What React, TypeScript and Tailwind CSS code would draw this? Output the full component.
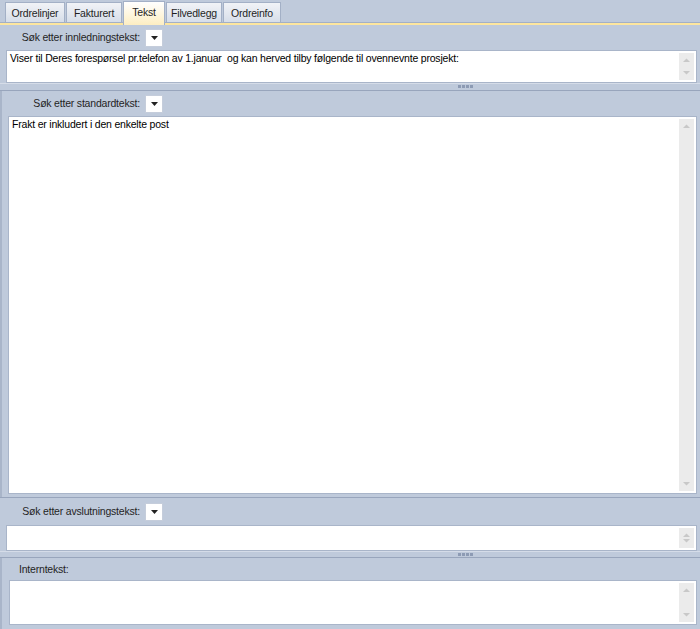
import { ReactNode } from 'react';

const font = { fontFamily: 'Tahoma, "Liberation Sans", Arial, sans-serif' };

const tabs = [
  { name: 'Ordrelinjer', w: 'w-[60px]' },
  { name: 'Fakturert', w: 'w-[56px]' },
  { name: 'Tekst', w: 'w-[42px]' },
  { name: 'Filvedlegg', w: 'w-[56px]' },
  { name: 'Ordreinfo', w: 'w-[58px]' },
];

const Dropdown = () => (
  <div className="flex h-[18px] w-[18px] shrink-0 items-center justify-center border border-[#c5cddb] bg-white">
    <svg width="7" height="4" viewBox="0 0 7 4">
      <path d="M0 0h7L3.5 4z" fill="#222" />
    </svg>
  </div>
);

const Scrollbar = () => (
  <div className="my-[2px] mr-[2px] flex w-[15px] flex-col justify-between bg-[#ebebeb] py-[4px]">
    <svg width="15" height="6" viewBox="0 0 15 6">
      <path d="M4 5h7L7.5 1.5z" fill="#c8c8c8" />
    </svg>
    <svg width="15" height="6" viewBox="0 0 15 6">
      <path d="M4 1h7L7.5 4.5z" fill="#c8c8c8" />
    </svg>
  </div>
);

const TextBox = ({ children, className }: { children?: ReactNode; className: string }) => (
  <div className={`flex border border-[#a9b5c9] bg-white ${className}`}>
    <div className="flex-1 px-[3px] pt-[1px] text-[10.5px] leading-[13px] tracking-[-0.2px] text-black">
      {children}
    </div>
    <Scrollbar />
  </div>
);

const Splitter = ({ h }: { h: string }) => (
  <div className={`flex flex-col border-t border-[#d5dce8] border-b border-b-[#98a5bc] ${h}`}>
    <div className="mt-[1px] flex justify-center gap-[1px] pl-[231px]">
      {[0, 1, 2, 3].map((i) => (
        <span key={i} className="h-[3px] w-[3px] bg-[#8d9bb4]" />
      ))}
    </div>
  </div>
);

// label column is right-aligned so every dropdown lines up at x=145
const SearchRow = ({ text, h, w }: { text: string; h: string; w: string }) => (
  <div className={`flex items-center gap-[5px] ${h}`}>
    <span className={`${w} shrink-0 text-right text-[10.5px] tracking-[-0.2px] text-[#1f1f1f]`}>{text}</span>
    <Dropdown />
  </div>
);

export default function App() {
  return (
    <div className="flex h-[629px] w-[700px] flex-col overflow-hidden bg-[#bfcadb]" style={font}>
      {/* tabs */}
      <div className="flex h-[22px] items-end gap-[1px] pl-[5px]">
        {tabs.map((t) => {
          const active = t.name === 'Tekst';
          return (
            <div
              key={t.name}
              className={
                active
                  ? `relative z-10 -mb-[3px] flex h-[24px] ${t.w} justify-center border border-b-0 border-[#a3b0c6] bg-gradient-to-b from-white to-[#fdeec2] pt-[3px] text-[10.5px] tracking-[-0.2px] text-[#1f1f1f]`
                  : `flex h-[20px] ${t.w} justify-center border border-b-0 border-[#a3b0c6] bg-gradient-to-b from-[#f1f3f7] to-[#d7dee9] pt-[3px] text-[10.5px] tracking-[-0.2px] text-[#1f1f1f]`
              }
            >
              {t.name}
            </div>
          );
        })}
      </div>
      <div className="h-[3px] shrink-0 border-t border-[#a3b0c6] bg-[#fde69e]" />

      {/* innledning */}
      <div className="flex shrink-0 flex-col">
        <SearchRow text="Søk etter innledningstekst:" h="h-[25px] pt-[1px]" w="w-[140px]" />
        <TextBox className="ml-[6px] mr-[3px] h-[33px]">
          Viser til Deres forespørsel pr.telefon av 1.januar&nbsp; og kan herved tilby følgende til ovennevnte prosjekt:
        </TextBox>
      </div>
      <Splitter h="h-[8px] shrink-0" />

      {/* standardtekst */}
      <div className="flex min-h-0 flex-1 flex-col border-l-2 border-[#a9b5c9] pb-[3px]">
        <SearchRow text="Søk etter standardtekst:" h="h-[25px] pt-[1px]" w="w-[138px]" />
        <TextBox className="ml-[6px] mr-[3px] min-h-0 flex-1">Frakt er inkludert i den enkelte post</TextBox>
      </div>
      <div className="h-[4px] shrink-0 border-t border-[#98a5bc]" />

      {/* avslutning */}
      <div className="flex shrink-0 flex-col">
        <SearchRow text="Søk etter avslutningstekst:" h="h-[24px] pb-[3px]" w="w-[140px]" />
        <TextBox className="ml-[6px] mr-[3px] h-[26px]" />
      </div>
      <Splitter h="h-[7px] shrink-0" />

      {/* internt */}
      <div className="flex shrink-0 flex-col border-l-2 border-[#a9b5c9] pb-[4px]">
        <div className="flex h-[22px] items-center pt-[1px]">
          <span className="pl-[17px] text-[10.5px] tracking-[-0.2px] text-[#1f1f1f]">Interntekst:</span>
        </div>
        <TextBox className="ml-[7px] mr-[3px] h-[45px]" />
      </div>
    </div>
  );
}
